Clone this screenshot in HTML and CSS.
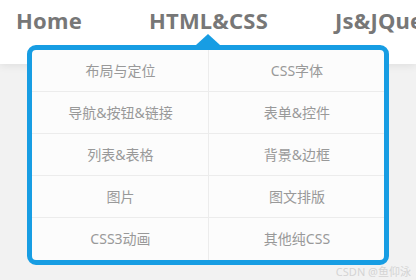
FILE: index.html
```html
<!DOCTYPE html>
<html lang="zh-CN">
<head>
    <meta charset="UTF-8">
    <meta name="viewport" content="width=device-width, initial-scale=1.0">
    <title>导航下拉菜单</title>
    <link rel="stylesheet" href="styles.css">
</head>
<body>
    <header class="topbar">
        <nav class="menu">
            <a class="menu-item" href="#">Home</a>
            <div class="menu-item has-sub">
                <a href="#">HTML&amp;CSS</a>
                <div class="dropdown">
                    <a href="#">布局与定位</a>
                    <a href="#">CSS字体</a>
                    <a href="#">导航&amp;按钮&amp;链接</a>
                    <a href="#">表单&amp;控件</a>
                    <a href="#">列表&amp;表格</a>
                    <a href="#">背景&amp;边框</a>
                    <a href="#">图片</a>
                    <a href="#">图文排版</a>
                    <a href="#">CSS3动画</a>
                    <a href="#">其他纯CSS</a>
                </div>
            </div>
            <a class="menu-item" href="#">Js&amp;JQuery</a>
        </nav>
    </header>
    <div class="watermark">CSDN @鱼仰泳</div>
</body>
</html>
```

FILE: styles.css
```css
html, body {
    height: 100%;
}
body {
    margin: 0;
    background-color: #f2f2f2;
    font-family: "Noto Sans", "Noto Sans CJK SC", sans-serif;
    overflow: hidden;
}
a {
    text-decoration: none;
    color: inherit;
}
.topbar {
    height: 64px;
    background-color: #fff;
    box-shadow: 0 2px 8px rgba(0,0,0,0.08);
}
.menu {
    display: flex;
    gap: 67px;
    padding-left: 16px;
    white-space: nowrap;
}
.menu-item {
    position: relative;
    font-size: 22px;
    font-weight: bold;
    color: #777;
    line-height: 40px;
    letter-spacing: 0.2px;
}
.dropdown {
    position: absolute;
    top: 45px;
    left: 50%;
    transform: translateX(-50%);
    width: 352px;
    display: grid;
    grid-template-columns: 176px 176px;
    background-color: #fcfcfc;
    border: 5px solid #179de3;
    border-radius: 9px;
    letter-spacing: 0;
}
.dropdown::before {
    content: "";
    position: absolute;
    top: -16px;
    left: 50%;
    margin-left: -12px;
    border: 12px solid transparent;
    border-top: 0;
    border-bottom: 11px solid #179de3;
}
.dropdown a {
    height: 42px;
    box-sizing: border-box;
    display: flex;
    align-items: center;
    justify-content: center;
    border-bottom: 1px solid #ececec;
    font-size: 14px;
    font-weight: normal;
    color: #999;
    line-height: 1;
}
.dropdown a:nth-child(even) {
    border-left: 1px solid #ececec;
}
.dropdown a:nth-last-child(-n+2) {
    border-bottom: none;
}
.watermark {
    position: absolute;
    right: 5px;
    bottom: 1px;
    font-size: 11px;
    color: #d4d4d4;
}
```
